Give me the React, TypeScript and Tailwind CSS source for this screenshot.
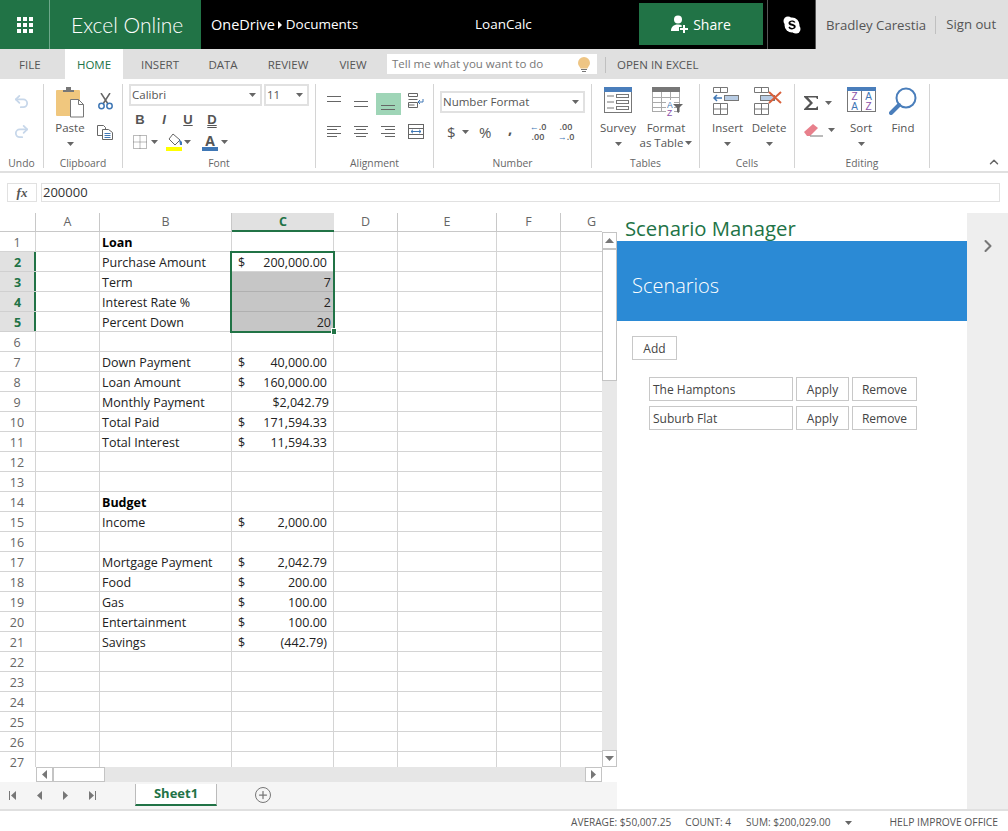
import { Plus, ChevronRight, ChevronUp, Undo2, Redo2 } from "lucide-react";
import type { ReactNode } from "react";

const Caret = ({ className = "" }: { className?: string }) => (
	<svg width="7" height="4" viewBox="0 0 7 4" className={className}>
		<path d="M0 0h7L3.5 4z" fill="#666" />
	</svg>
);

const Arrow = ({ dir }: { dir: "up" | "down" | "left" | "right" }) => {
	const d = {
		up: "M0 5L4.5 0L9 5z",
		down: "M0 0h9L4.5 5z",
		left: "M5 0v9L0 4.5z",
		right: "M0 0v9L5 4.5z",
	}[dir];
	const vert = dir === "up" || dir === "down";
	return (
		<svg width={vert ? 9 : 5} height={vert ? 5 : 9} viewBox={vert ? "0 0 9 5" : "0 0 5 9"}>
			<path d={d} fill="#777" />
		</svg>
	);
};

const Group = ({
	label,
	className,
	children,
}: {
	label: string;
	className: string;
	children: ReactNode;
}) => (
	<div className={`h-[84px] shrink-0 flex flex-col border-r border-[#d4d4d4] ${className}`}>
		<div className="h-[75px] flex">{children}</div>
		<div className="text-[10.300px] leading-[9px] pt-[1px] text-[#666] text-center whitespace-nowrap">{label}</div>
	</div>
);

const BigButton = ({
	icon,
	lines,
	caret = true,
	className = "",
}: {
	icon: ReactNode;
	lines: string[];
	caret?: boolean;
	className?: string;
}) => (
	<div className={`flex flex-col items-center ${className}`}>
		<div className="h-[35px] pt-[3px] flex items-start justify-center">{icon}</div>
		<div className="mt-[1px] text-[11.500px] leading-[15px] text-[#555] text-center whitespace-nowrap">
			{lines.map((l) => (
				<div key={l}>{l}</div>
			))}
		</div>
		{caret && lines.length === 1 && <Caret className="mt-[7px]" />}
	</div>
);

const AlignIcon = ({ rows, y = 0, gap = 3.400 }: { rows: number[][]; y?: number; gap?: number }) => (
	<svg width="15" height="15" viewBox="0 0 15 15">
		{rows.map(([x, w], i) => (
			<rect key={i} x={x} y={Math.round(y + i * gap)} width={w} height="1" fill="#666" />
		))}
	</svg>
);

const PasteIcon = () => (
	<svg width="29" height="31" viewBox="0 0 29 31">
		<rect x="0" y="3" width="24" height="26" rx="1" fill="#f0c77e" />
		<path d="M7 5V3h3V0h5v3h3v2z" fill="#777" />
		<path d="M14.500 12.500h8l5 5v12.500h-13z" fill="#fff" stroke="#777" />
		<path d="M22.500 12.500v5h5" fill="none" stroke="#777" />
	</svg>
);

const CutIcon = () => (
	<svg width="15" height="17" viewBox="0 0 15 17" fill="none">
		<path d="M3 0l7 11M12 0L5 11" stroke="#666" strokeWidth="1.500" />
		<circle cx="3.500" cy="13" r="2.700" stroke="#3f77b5" strokeWidth="1.500" />
		<circle cx="11.500" cy="13" r="2.700" stroke="#3f77b5" strokeWidth="1.500" />
	</svg>
);

const CopyIcon = () => (
	<svg width="16" height="15" viewBox="0 0 16 15" fill="none" stroke="#666">
		<path d="M.5 .5h6l2 2v8h-8z" fill="#fff" />
		<path d="M5.500 4.500h6l4 3v7h-10z" fill="#fff" />
		<path d="M7.500 8.500h6M7.500 10.500h6M7.500 12.500h6" stroke="#3f77b5" />
	</svg>
);

const BordersIcon = () => (
	<svg width="14" height="14" viewBox="0 0 14 14" fill="none" stroke="#777" strokeDasharray="1 1">
		<rect x=".5" y=".5" width="13" height="13" />
		<path d="M7 .5v13M.5 7h13" />
	</svg>
);

const FillIcon = () => (
	<svg width="17" height="18" viewBox="0 0 17 18">
		<path d="M7 1l7 6-5 5-6-6z" fill="#fff" stroke="#666" />
		<path d="M13 6l3 3v3h-2z" fill="#3f77b5" />
		<rect x="0" y="14" width="16" height="4" fill="#ffff00" />
	</svg>
);

const WrapIcon = () => (
	<svg width="16" height="16" viewBox="0 0 16 16" fill="none" stroke="#666">
		<path d="M.5 .5h9v3h-9zM.5 6.500h9M.5 9.500h9v5h-9zM.5 12h6" />
		<path d="M15 6v3h-5m2-2l-2 2 2 2" stroke="#3f77b5" />
	</svg>
);

const MergeIcon = () => (
	<svg width="16" height="15" viewBox="0 0 16 15" fill="none" stroke="#666">
		<rect x=".5" y=".5" width="15" height="14" />
		<path d="M.5 4.500h15M.5 10.500h15" />
		<path d="M3 7.500h10M5 5.800L3 7.500l2 1.700M11 5.800l2 1.700-2 1.700" stroke="#3f77b5" />
	</svg>
);

const SurveyIcon = () => (
	<svg width="28" height="26" viewBox="0 0 28 26" fill="none" stroke="#777">
		<rect x=".5" y=".5" width="27" height="25" fill="#fff" />
		<rect x="0" y="0" width="28" height="5" fill="#4a7ebb" stroke="none" />
		<path d="M3 9h7M3 15h7M3 21h7" />
		<rect x="12.500" y="7.500" width="12" height="3" />
		<rect x="12.500" y="13.500" width="12" height="3" />
		<rect x="12.500" y="19.500" width="12" height="3" />
	</svg>
);

const FormatTableIcon = () => (
	<svg width="31" height="31" viewBox="0 0 31 31" fill="none">
		<rect x=".5" y=".5" width="27" height="24" fill="#fff" stroke="#aaa" />
		<rect x="0" y="0" width="28" height="5" fill="#777" />
		<path d="M0 10.500h28M0 15.500h28M0 20.500h28M9.500 5v20M18.500 5v20" stroke="#aaa" />
		<rect x="14" y="13" width="8" height="15" fill="#fff" />
		<path d="M21 17h10l-4 4v5l-2-1v-4z" fill="#666" />
		<text x="15" y="21" fontSize="8.500" fill="#3f77b5" fontFamily="Liberation Sans, sans-serif">A</text>
		<text x="15" y="29" fontSize="8.500" fill="#8a4fa8" fontFamily="Liberation Sans, sans-serif">Z</text>
	</svg>
);

const CellsIcon = ({ del }: { del?: boolean }) => (
	<svg width="30" height="28" viewBox="0 0 30 28" fill="none" stroke="#777">
		<path d="M.5 .5h14v5h-14zM7.500 .5v5M.5 16.500h14v11h-14zM.5 22h14M7.500 16.500v11" />
		{del ? (
			<>
				<rect x="6.500" y="8.500" width="14" height="5" fill="#b8cce4" />
				<path d="M15 5l12 11M27 5L15 16" stroke="#d9603b" strokeWidth="2" />
			</>
		) : (
			<>
				<rect x="11.500" y="8.500" width="14" height="5" fill="#b8cce4" />
				<path d="M1 11h8M4 8l-3 3 3 3" stroke="#3f77b5" strokeWidth="1.500" />
			</>
		)}
	</svg>
);

const SigmaIcon = () => (
	<svg width="15" height="14" viewBox="0 0 15 14">
		<path d="M0 0h14v3h-1l-1-1.500H4L9 7l-5 5h8l1-1.500h1V14H0v-1l6-6-6-6z" fill="#555" />
	</svg>
);

const EraserIcon = () => (
	<svg width="20" height="14" viewBox="0 0 20 14">
		<path d="M0 9l9-8 5 4-8 8H3z" fill="#e8808c" />
		<path d="M6 13h13" stroke="#777" />
	</svg>
);

const SortIcon = () => (
	<svg width="29" height="25" viewBox="0 0 29 25">
		<rect x=".5" y=".5" width="28" height="24" fill="#fff" stroke="#777" />
		<rect x="0" y="0" width="29" height="4" fill="#4a7ebb" />
		<path d="M14.500 4v20" stroke="#777" />
		<g fontSize="10" fontFamily="Liberation Sans, sans-serif" textAnchor="middle">
			<text x="7.500" y="13" fill="#8a4fa8">Z</text>
			<text x="7.500" y="23" fill="#3f77b5">A</text>
			<text x="21.500" y="13" fill="#3f77b5">A</text>
			<text x="21.500" y="23" fill="#8a4fa8">Z</text>
		</g>
	</svg>
);

const FindIcon = () => (
	<svg width="28" height="28" viewBox="0 0 28 28" fill="none">
		<circle cx="17" cy="11" r="9.500" stroke="#4a7ebb" strokeWidth="2" />
		<path d="M10 18L2 26" stroke="#4a7ebb" strokeWidth="4" strokeLinecap="round" />
	</svg>
);

const SkypeIcon = () => (
	<svg width="18" height="18" viewBox="0 0 18 18">
		<circle cx="5" cy="5" r="4.500" fill="#fff" />
		<circle cx="13" cy="13" r="4.500" fill="#fff" />
		<circle cx="9" cy="9" r="7.500" fill="#fff" />
		<path
			d="M12.500 6.200C11.800 5 10.400 4.500 9 4.500 7 4.500 5.500 5.500 5.500 7c0 3.200 5.300 2 5.300 3.900 0 .7-.8 1.100-1.800 1.100-1.200 0-1.900-.6-2.300-1.400l-1.300.8c.6 1.300 2 2 3.600 2 2.200 0 3.700-1.100 3.700-2.800 0-3.300-5.300-2.200-5.300-3.900 0-.6.700-1 1.600-1 1 0 1.600.4 2 1z"
			fill="#000"
		/>
	</svg>
);

const ShareIcon = () => (
	<svg width="18" height="18" viewBox="0 0 18 18">
		<circle cx="7" cy="4.500" r="4" fill="#fff" />
		<path d="M0 16c0-4 2.500-6.500 7-6.500 1.500 0 2.700.3 3.700.8V12H8v4z" fill="#fff" />
		<path d="M12 10h2v3h3v2h-3v3h-2v-3H9v-2h3z" fill="#fff" />
	</svg>
);

const BulbIcon = () => (
	<svg width="12" height="15" viewBox="0 0 12 15">
		<path d="M6 0a6 6 0 0 1 6 6c0 2.500-2 3.500-2.500 5.500h-7C2 9.500 0 8.500 0 6a6 6 0 0 1 6-6z" fill="#eec584" />
		<path d="M3 12.500h6M4 14.500h4" stroke="#777" />
	</svg>
);

const COLUMNS = [
	{ name: "A", w: "w-[64px]" },
	{ name: "B", w: "w-[132px]" },
	{ name: "C", w: "w-[102px]" },
	{ name: "D", w: "w-[64px]" },
	{ name: "E", w: "w-[99px]" },
	{ name: "F", w: "w-[64px]" },
	{ name: "G", w: "w-[62px]" },
];

type Row = { label?: string; bold?: boolean; dollar?: boolean; value?: string };

const ROWS: Record<number, Row> = {
	1: { label: "Loan", bold: true },
	2: { label: "Purchase Amount", dollar: true, value: "200,000.00" },
	3: { label: "Term", value: "7" },
	4: { label: "Interest Rate %", value: "2" },
	5: { label: "Percent Down", value: "20" },
	7: { label: "Down Payment", dollar: true, value: "40,000.00" },
	8: { label: "Loan Amount", dollar: true, value: "160,000.00" },
	9: { label: "Monthly Payment", value: "$2,042.79" },
	10: { label: "Total Paid", dollar: true, value: "171,594.33" },
	11: { label: "Total Interest", dollar: true, value: "11,594.33" },
	14: { label: "Budget", bold: true },
	15: { label: "Income", dollar: true, value: "2,000.00" },
	17: { label: "Mortgage Payment", dollar: true, value: "2,042.79" },
	18: { label: "Food", dollar: true, value: "200.00" },
	19: { label: "Gas", dollar: true, value: "100.00" },
	20: { label: "Entertainment", dollar: true, value: "100.00" },
	21: { label: "Savings", dollar: true, value: "(442.79)" },
};

const rowNumbers = Array.from({ length: 27 }, (_, i) => i + 1);

const Sheet = () => (
	<div className="relative w-[602px] h-[554px] overflow-hidden bg-white text-[12.500px] text-[#222]">
		<div className="flex h-[19px] w-[625px]">
			<div className="w-[36px] shrink-0 border-r border-b border-[#c8c8c8]" />
			{COLUMNS.map((c) =>
				c.name === "C" ? (
					<div
						key={c.name}
						className={`${c.w} shrink-0 bg-[#e1e1e1] border-b-2 border-[#217346] text-center font-bold text-[#217346] leading-[18px]`}
					>
						{c.name}
					</div>
				) : (
					<div
						key={c.name}
						className={`${c.w} shrink-0 border-r border-b border-[#c8c8c8] text-center text-[#666] leading-[18px]`}
					>
						{c.name}
					</div>
				),
			)}
		</div>
		{rowNumbers.map((n) => {
			const row = ROWS[n] ?? {};
			const selected = n >= 2 && n <= 5;
			const grey = n >= 3 && n <= 5;
			const currency = row.value?.startsWith("$");
			return (
				<div key={n} className="flex h-[20px] w-[625px] leading-[22px]">
					{selected ? (
						<div className="w-[36px] shrink-0 bg-[#e1e1e1] shadow-[inset_-2px_0_0_#217346] border-b border-[#d0d0d0] text-center font-bold text-[#217346] pr-[1px]">
							{n}
						</div>
					) : (
						<div className="w-[36px] shrink-0 border-r border-b border-[#d4d4d4] text-center text-[#666] pr-[1px]">
							{n}
						</div>
					)}
					<div className="w-[64px] shrink-0 border-r border-b border-[#d4d4d4]" />
					<div
						className={`w-[132px] shrink-0 border-r border-b border-[#d4d4d4] pl-[2px] whitespace-nowrap ${
							row.bold ? "font-bold text-black" : ""
						}`}
					>
						{row.label}
					</div>
					<div
						className={`w-[102px] shrink-0 flex justify-between border-r border-b ${
							grey ? "bg-[#c6c6c6] border-[#b0b0b0]" : "border-[#d4d4d4]"
						} ${row.dollar ? "pl-[6px] pr-[6px]" : currency ? "pr-[4px]" : "pr-[2px]"}`}
					>
						<span>{row.dollar ? "$" : ""}</span>
						<span>{row.value}</span>
					</div>
					<div className="w-[64px] shrink-0 border-r border-b border-[#d4d4d4]" />
					<div className="w-[99px] shrink-0 border-r border-b border-[#d4d4d4]" />
					<div className="w-[64px] shrink-0 border-r border-b border-[#d4d4d4]" />
					<div className="w-[62px] shrink-0 border-r border-b border-[#d4d4d4]" />
				</div>
			);
		})}
		{/* selection box sits on top of the cells */}
		<div className="absolute left-[230px] top-[38px] w-[105px] h-[82px] border-2 border-[#217346]" />
		<div className="absolute left-[331px] top-[115px] w-[4px] h-[5px] bg-[#217346] border border-white box-content" />
	</div>
);

const ScrollButton = ({ children, className = "" }: { children: ReactNode; className?: string }) => (
	<div className={`bg-white border border-[#c4c4c4] flex items-center justify-center ${className}`}>
		{children}
	</div>
);

export default function App() {
	return (
		<div
			className="w-[1008px] h-[831px] overflow-hidden flex flex-col bg-white"
			style={{ fontFamily: '"Open Sans", "Noto Sans", sans-serif' }}
		>
			{/* top bar */}
			<div className="h-[49px] flex bg-black text-white shrink-0">
				<div className="w-[201px] bg-[#217346] flex">
					<div className="w-[50px] border-r border-[#6da88a] flex items-center justify-center">
						<div className="grid grid-cols-3 gap-[2px]">
							{Array.from({ length: 9 }, (_, i) => (
								<div key={i} className="w-[4px] h-[4px] bg-white" />
							))}
						</div>
					</div>
					<div
						className="pl-[21px] text-[21px] font-light leading-[49px] whitespace-nowrap"
						style={{ fontFamily: "Lato, sans-serif" }}
					>
						Excel Online
					</div>
				</div>
				<div className="w-[264px] pl-[10px] text-[13.500px] leading-[49px] flex items-center gap-[3px]">
					<span className="text-[14.500px]">OneDrive</span>
					<svg width="4" height="8" viewBox="0 0 4 8">
						<path d="M0 0l4 4-4 4z" fill="#fff" />
					</svg>
					<span className="ml-[1px]">Documents</span>
				</div>
				<div className="w-[174px] text-[13.500px] leading-[49px] pl-[10px]">LoanCalc</div>
				<div className="w-[124px] h-[42px] mt-[3px] bg-[#217346] flex items-center justify-center gap-[4px] text-[14px]">
					<ShareIcon />
					<span>Share</span>
				</div>
				<div className="w-[5px] border-r border-[#555]" />
				<div className="w-[48px] border-r border-[#555] flex items-center justify-center">
					<SkypeIcon />
				</div>
				<div className="flex-1 bg-[#e0e0e0] flex items-center text-[13.200px] text-[#555] pl-[10px] whitespace-nowrap">
					<span className="pr-[9px] border-r border-[#c0c0c0] leading-[18px]">Bradley Carestia</span>
					<span className="pl-[10px]">Sign out</span>
				</div>
			</div>

			{/* tabs */}
			<div className="h-[30px] pt-[1px] bg-[#e0e0e0] flex items-center text-[11.500px] text-[#555] shrink-0">
				<div className="w-[65px] pl-[19px]">FILE</div>
				<div className="w-[58px] h-[30px] -mt-[1px] bg-white text-[#217346] flex items-center justify-center pt-[1px]">HOME</div>
				<div className="w-[73px] text-center pl-[1px]">INSERT</div>
				<div className="w-[54px] text-center">DATA</div>
				<div className="w-[76px] text-center">REVIEW</div>
				<div className="w-[49px] pl-[5px] text-center">VIEW</div>
				<div className="ml-[12px] w-[210px] h-[20px] -mt-[1px] bg-white flex items-center justify-between pl-[5px] pr-[7px] text-[#777]">
					<span>Tell me what you want to do</span>
					<BulbIcon />
				</div>
				<div className="ml-[8px] h-[16px] border-l border-[#c0c0c0] pl-[11px] leading-[16px] text-[#555]">
					OPEN IN EXCEL
				</div>
			</div>

			{/* ribbon */}
			<div className="h-[94px] pt-[5px] flex border-b-2 border-[#e0e0e0] shrink-0 relative">
				<Group label="Undo" className="w-[44px]">
					<div className="w-full flex flex-col items-center pt-[9px] gap-[13px] pr-[1px]">
						<Undo2 size={17} strokeWidth={2.500} className="text-[#c7d7ea]" />
						<Redo2 size={17} strokeWidth={2.500} className="text-[#c7d7ea]" />
					</div>
				</Group>
				<Group label="Clipboard" className="w-[79px]">
					<div className="flex w-full">
						<div className="w-[53px]">
							<BigButton icon={<PasteIcon />} lines={["Paste"]} className="-ml-[1px]" />
						</div>
						<div className="flex flex-col items-center pt-[9px] gap-[15px]">
							<CutIcon />
							<CopyIcon />
						</div>
					</div>
				</Group>
				<Group label="Font" className="w-[193px]">
					<div className="pl-[6px] w-full flex flex-col">
						<div className="flex gap-[2px] h-[22px] text-[11.500px] text-[#555]">
							<div className="w-[133px] border-2 border-[#e1e1e1] flex items-center justify-between pl-[1px] pr-[4px]">
								<span>Calibri</span>
								<Caret />
							</div>
							<div className="w-[45px] border-2 border-[#e1e1e1] flex items-center justify-between pl-[1px] pr-[4px]">
								<span>11</span>
								<Caret />
							</div>
						</div>
						<div
							className="flex mt-[4px] h-[18px] text-[13px] text-[#555] font-bold -ml-[1px]"
							style={{ fontFamily: '"Liberation Sans", sans-serif' }}
						>
							<span className="w-[24px] text-center">B</span>
							<span className="w-[24px] text-center italic">I</span>
							<span className="w-[24px] text-center underline">U</span>
							<span className="w-[24px] text-center underline decoration-double">D</span>
						</div>
						<div className="flex items-center mt-[5px] pl-[4px]">
							<BordersIcon />
							<Caret className="ml-[4px]" />
							<div className="ml-[8px]"><FillIcon /></div>
							<Caret className="ml-[1px]" />
							<div className="ml-[11px] w-[16px] h-[17px] flex flex-col items-center">
								<span className="text-[14px] leading-[13px] font-bold text-[#555]">A</span>
								<span className="w-[16px] h-[4px] bg-[#3f77b5] mt-auto" />
							</div>
							<Caret className="ml-[3px]" />
						</div>
					</div>
				</Group>
				<Group label="Alignment" className="w-[118px]">
					<div className="grid grid-cols-[28px_27px_27px_28px] grid-rows-[30px_30px] pl-[4px] pt-[2px] w-full">
						<div className="flex items-center justify-center"><AlignIcon rows={[[0, 14], [0, 14]]} y={2} gap={5} /></div>
						<div className="flex items-center justify-center"><AlignIcon rows={[[0, 14], [0, 14]]} y={7} gap={5} /></div>
						<div className="flex items-center justify-center">
							<div className="w-[25px] h-[22px] mt-[5px] bg-[#9fd5b7] flex items-center justify-center"><AlignIcon rows={[[0, 14], [0, 14]]} y={9} gap={4} /></div>
						</div>
						<div className="flex items-center justify-center"><WrapIcon /></div>
						<div className="flex items-center justify-center"><AlignIcon rows={[[0, 14], [0, 10], [0, 14], [0, 10]]} y={2} /></div>
						<div className="flex items-center justify-center"><AlignIcon rows={[[0, 14], [2, 10], [0, 14], [2, 10]]} y={2} /></div>
						<div className="flex items-center justify-center"><AlignIcon rows={[[0, 14], [4, 10], [0, 14], [4, 10]]} y={2} /></div>
						<div className="flex items-center justify-center"><MergeIcon /></div>
					</div>
				</Group>
				<Group label="Number" className="w-[158px]">
					<div className="pl-[6px] pt-[7px] w-full flex flex-col">
						<div className="w-[145px] h-[22px] border-2 border-[#e1e1e1] flex items-center justify-between text-[11.500px] text-[#555] pl-[1px] pr-[4px]">
							<span>Number Format</span>
							<Caret />
						</div>
						<div className="flex items-center mt-[8px] text-[#555] h-[22px]">
							<span className="ml-[7px] text-[15px] w-[9px]">$</span>
							<Caret className="ml-[6px]" />
							<span className="ml-[10px] text-[15px] w-[14px]">%</span>
							<span className="ml-[15px] w-[5px] -mt-[8px] text-[15px] font-bold leading-[12px]">,</span>
							<div className="ml-[15px] w-[20px] text-[9px] leading-[10px] text-center font-semibold whitespace-nowrap"><span className="text-[#3f77b5]">←</span>.0<br />.00</div>
							<div className="ml-[8px] w-[20px] text-[9px] leading-[10px] text-center font-semibold whitespace-nowrap">.00<br /><span className="text-[#3f77b5]">→</span>.0</div>
						</div>
					</div>
				</Group>
				<Group label="Tables" className="w-[108px]">
					<div className="flex w-full pl-[6px]">
						<BigButton icon={<SurveyIcon />} lines={["Survey"]} className="w-[40px]" />
						<div className="flex flex-col items-center w-[54px] ml-[1px]">
							<div className="h-[35px] pt-[3px] flex items-start pl-[3px]"><FormatTableIcon /></div>
							<div className="mt-[1px] text-[11.500px] leading-[15px] text-[#555] text-center whitespace-nowrap">
								<div>Format</div>
								<div className="flex items-center gap-[2px]">as Table<Caret /></div>
							</div>
						</div>
					</div>
				</Group>
				<Group label="Cells" className="w-[95px]">
					<div className="flex w-full pl-[7px]">
						<BigButton icon={<CellsIcon />} lines={["Insert"]} className="w-[40px] pl-[1px]" />
						<BigButton icon={<CellsIcon del />} lines={["Delete"]} className="w-[44px]" />
					</div>
				</Group>
				<Group label="Editing" className="w-[135px]">
					<div className="flex w-full">
						<div className="w-[51px] pl-[9px] pt-[12px] flex flex-col gap-[13px]">
							<div className="flex items-center gap-[6px]"><SigmaIcon /><Caret /></div>
							<div className="flex items-center gap-[4px]"><EraserIcon /><Caret /></div>
						</div>
						<BigButton icon={<SortIcon />} lines={["Sort"]} className="w-[30px]" />
						<BigButton icon={<FindIcon />} lines={["Find"]} caret={false} className="w-[42px] ml-[6px]" />
					</div>
				</Group>
				<ChevronUp size={14} strokeWidth={2.500} className="absolute right-[7px] top-[76px] text-[#666]" />
			</div>

			{/* formula bar */}
			<div className="h-[40px] pt-[10px] flex gap-[4px] pl-[7px] pr-[8px] shrink-0">
				<div
					className="w-[30px] h-[19px] border border-[#e1e1e1] flex items-center justify-center text-[13px] italic font-bold text-[#555]"
					style={{ fontFamily: '"Liberation Serif", serif' }}
				>
					fx
				</div>
				<div className="flex-1 h-[19px] border border-[#e1e1e1] pl-[1px] text-[13px] leading-[17px] text-[#333]">200000</div>
			</div>

			{/* workspace */}
			<div className="flex-1 flex min-h-0">
				<div className="w-[617px] flex flex-col shrink-0">
					<div className="flex h-[554px]">
						<Sheet />
						<div className="w-[15px] flex flex-col">
							<div className="h-[19px]" />
							<div className="flex-1 bg-[#e8e8e8] flex flex-col">
								<ScrollButton className="h-[17px]"><Arrow dir="up" /></ScrollButton>
								<div className="h-[132px] bg-white border border-[#c4c4c4]" />
								<div className="flex-1" />
								<ScrollButton className="h-[17px]"><Arrow dir="down" /></ScrollButton>
							</div>
						</div>
					</div>
					<div className="h-[15px] flex">
						<div className="w-[36px]" />
						<div className="flex-1 bg-[#e6e6e6] flex">
							<ScrollButton className="w-[17px]"><Arrow dir="left" /></ScrollButton>
							<div className="w-[52px] bg-white border border-[#c4c4c4]" />
							<div className="flex-1" />
							<ScrollButton className="w-[17px]"><Arrow dir="right" /></ScrollButton>
						</div>
						<div className="w-[15px]" />
					</div>
					<div className="flex-1 bg-[#f5f5f5] flex items-start">
						<div className="flex items-center pt-[9px] pl-[9px] gap-[21px] w-[135px]">
							<div className="flex items-center gap-[1px]"><div className="w-[1px] h-[9px] bg-[#777]" /><Arrow dir="left" /></div>
							<Arrow dir="left" />
							<Arrow dir="right" />
							<div className="flex items-center gap-[1px]"><Arrow dir="right" /><div className="w-[1px] h-[9px] bg-[#777]" /></div>
						</div>
						<div className="mt-[2px] w-[82px] h-[22px] bg-white border-x border-[#bbb] border-b-2 border-b-[#217346] text-center text-[13px] font-bold text-[#217346] leading-[18px]">
							Sheet1
						</div>
						<div className="ml-[38px] mt-[5px] w-[16px] h-[16px] rounded-full border border-[#777] flex items-center justify-center">
							<Plus size={12} strokeWidth={2.500} className="text-[#777]" />
						</div>
					</div>
				</div>

				{/* task pane */}
				<div className="w-[350px] shrink-0 flex flex-col">
					<div className="h-[28px] pl-[8px] text-[20.300px] leading-[30px] text-[#217346] whitespace-nowrap">Scenario Manager</div>
					<div className="h-[80px] bg-[#2b8ad5] pl-[15px] pt-[9px] flex items-center text-[20px] font-light text-white">Scenarios</div>
					<div className="pl-[15px] pt-[15px] text-[12px] text-[#444]">
						<div className="w-[45px] h-[24px] border border-[#c8c8c8] text-center leading-[24px]">Add</div>
						<div className="mt-[17px] ml-[17px] flex flex-col gap-[5px]">
							{["The Hamptons", "Suburb Flat"].map((name) => (
								<div key={name} className="flex gap-[3px]">
									<div className="w-[144px] h-[24px] border border-[#c8c8c8] pl-[3px] leading-[24px]">{name}</div>
									<div className="w-[53px] h-[24px] border border-[#c8c8c8] text-center leading-[24px]">Apply</div>
									<div className="w-[65px] h-[24px] border border-[#c8c8c8] text-center leading-[24px]">Remove</div>
								</div>
							))}
						</div>
					</div>
				</div>
				<div className="flex-1 bg-[#eeeeee] flex justify-center pt-[23px]">
					<ChevronRight size={20} strokeWidth={2.500} className="text-[#777]" />
				</div>
			</div>

			{/* status bar */}
			<div className="h-[22px] pt-[3px] shrink-0 border-t-2 border-[#e0e0e0] flex items-center text-[10.100px] text-[#555] whitespace-nowrap">
				<span className="ml-[571px]">AVERAGE: $50,007.25</span>
				<span className="ml-[14px]">COUNT: 4</span>
				<span className="ml-[15px]">SUM: $200,029.00</span>
				<Caret className="ml-[14px]" />
				<span className="ml-[38px] text-[10.300px]">HELP IMPROVE OFFICE</span>
			</div>
		</div>
	);
}
